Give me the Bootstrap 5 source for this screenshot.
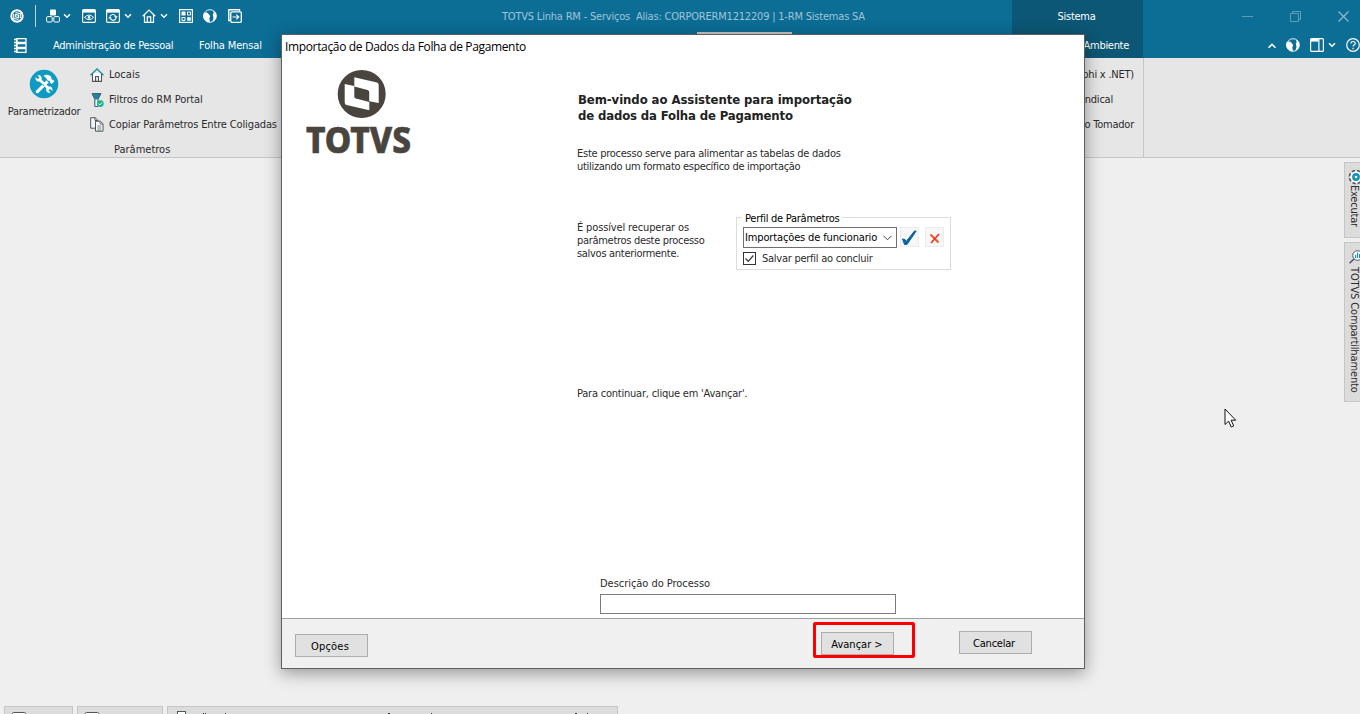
<!DOCTYPE html>
<html lang="pt-BR">
<head>
<meta charset="utf-8">
<title>TOTVS Linha RM</title>
<link rel="stylesheet" href="https://cdn.jsdelivr.net/npm/bootstrap@5.3.0/dist/css/bootstrap.min.css">
<style>
body{height:714px;overflow:hidden;background:#efefef;color:#2b2b2b;font-family:"DejaVu Sans Condensed","DejaVu Sans",sans-serif;font-size:11px;line-height:13px;white-space:nowrap}
svg{display:block;flex:none}
.topbar,.menubar{background:#0c6d95;height:29px;color:#fff}
.tools{padding:5px 0 0 10px}
.vsep{width:1px;height:22px;margin:0 10px 0 11px;background:#b5d3df}
.app-title{color:#a0c4d8;width:364px;margin-left:260px;padding-top:10px;letter-spacing:-.2px}
.ctx{background:#0c5775;width:131px;height:29px}
.active-tab{width:95px;height:26px;background:#c9c9c5}
.ribbon{height:100px;background:#e6e6e6;border-bottom:1px solid #c6c6c6}
.ribbon-right{border-right:1px solid #c6c6c6;height:99px;width:132px}
.rib-row{height:25px}
.ws{height:548px}
.dock{width:16px;overflow:hidden;padding-top:4px}
.dock-tab{width:24px;background:#dcdcdc;border:1px solid #c6c6c6}
.dock-text{writing-mode:vertical-rl;line-height:11px;margin-left:1px}
.taskbtn{height:30px;background:#dcdcdc;border:1px solid #c6c6c6}
.wiz{left:281px;top:34px;width:804px;height:635px;background:#fff;border:1px solid #5c6063;box-shadow:0 4px 16px rgba(0,0,0,.38)}
.wiz-title{font-family:"Open Sans",sans-serif;font-size:12px;color:#000;height:23px;letter-spacing:-.35px}
.wiz-left{width:295px}
.hd{font-size:13px;font-weight:700;line-height:16px;color:#222;letter-spacing:-.07px}
.profile{width:215px;height:53px;border:1px solid #dcdcdc}
.profile-legend{left:5px;top:-6px;background:#fff;padding:0 3px;color:#000}
.combo{width:154px;height:21px;border:1px solid #6f6f6f;color:#000}
.sq{width:19px;height:20px;background:#f7f7f7;border:1px solid #ececec}
.desc{width:296px;height:20px;border:1px solid #7a7a7a}
.wiz-foot{height:50px;background:#f0f0f0;border-top:1px solid #a0a0a0}
.wbtn{width:73px;height:23px;background:#e1e1e1;border:1px solid #adadad;border-radius:0;color:#000;padding:1px 1px 0 0;font-size:11px;line-height:13px}
.hot{left:531px;top:587px;width:102px;height:36px;border:3px solid #f00;border-radius:2px}
.cursor{left:1224px;top:408px}
.ls1{letter-spacing:-.14px}.ls2{letter-spacing:-.22px}.ls25{letter-spacing:-.26px}.ls3{letter-spacing:-.3px}.lp{letter-spacing:.2px}
</style>
</head>
<body>
<svg width="0" height="0" class="position-absolute">
<symbol id="chev" viewBox="0 0 8 6"><path d="M1 1.2l3 3 3-3" fill="none" stroke="#fff" stroke-width="1.5"/></symbol>
<symbol id="globe" viewBox="0 0 14 14"><circle cx="7" cy="7" r="6.3" fill="none" stroke="#fff" stroke-width=".9"/><path d="M1 4Q3.500 3 5 4.200L7.200 7 6.300 9.500 7 13.300A6.300 6.300 0 0 1 1 4zM10 1.500c2.500 1 3.600 3.500 3.400 6-.4 2.700-2 4.600-4.200 5.400L10.500 9 9.800 5.600l.9-1.700z" fill="#fff"/></symbol>
</svg>
<header>
<div class="topbar d-flex align-items-start">
<div class="tools d-flex align-items-center">
<svg width="14" height="14" viewBox="0 0 14 14"><circle cx="7" cy="7" r="5.700" fill="none" stroke="#fff" stroke-width="2"/><path d="M5.600 3.500l4.700 1.200v4.600M8.400 10.500L3.700 9.300V4.700M5.600 5.400l2.900.8v2.500l-2.900-.8z" fill="none" stroke="#fff" stroke-width="1.100"/></svg>
<i class="vsep"></i>
<svg width="14" height="14" viewBox="0 0 14 14"><rect x="4" y="0.500" width="6" height="6" rx="1" fill="#fff"/><rect x=".6" y="7.600" width="5.600" height="5.400" rx="1" fill="none" stroke="#fff"/><rect x="7.800" y="7.600" width="5.600" height="5.400" rx="1" fill="none" stroke="#fff"/></svg>
<svg width="8" height="6" style="margin:0 11px 0 3px"><use href="#chev"/></svg>
<svg width="14" height="14" viewBox="0 0 14 14"><rect x=".6" y=".6" width="12.800" height="12.800" rx="1.200" fill="none" stroke="#fff" stroke-width="1.200"/><path d="M0 1h14v2.600H0z" fill="#fff"/><path d="M2.500 8.400q4.500-4.800 9 0q-4.500 4.600-9 0z" fill="none" stroke="#fff"/><circle cx="7" cy="8.400" r="1.300" fill="#fff"/></svg>
<svg width="14" height="14" viewBox="0 0 14 14" style="margin:0 4px 0 10px"><rect x=".6" y=".6" width="12.800" height="12.800" rx="1.200" fill="none" stroke="#fff" stroke-width="1.200"/><path d="M0 1h14v2.600H0z" fill="#fff"/><path d="M4 7.500a3.100 3.100 0 0 1 5.700-.3M10 9.300a3.100 3.100 0 0 1-5.700.3" fill="none" stroke="#fff" stroke-width="1.100"/><path d="M8 7.300h3.800L10 9.400zM2.200 9.500H6L4 7.400z" fill="#fff"/></svg>
<svg width="8" height="6"><use href="#chev"/></svg>
<svg width="14" height="14" viewBox="0 0 14 14" style="margin:0 4px 0 10px"><path d="M.7 7.200L7 1l6.300 6.200M2.500 6v7.300h9V6M5.300 13V7.800h3.400V13" fill="none" stroke="#fff" stroke-width="1.200"/></svg>
<svg width="8" height="6" style="margin-right:11px"><use href="#chev"/></svg>
<svg width="14" height="14" viewBox="0 0 14 14"><rect x=".6" y=".6" width="12.800" height="12.800" fill="none" stroke="#fff" stroke-width="1.200"/><path d="M2.500 2.500h4v4h-4zM8.200 8.200h3.600v3.600H8.200z" fill="#fff"/><path d="M8.500 3h3v3h-3zM3 8.500h3v3H3z" fill="none" stroke="#fff"/></svg>
<svg width="14" height="14" style="margin:0 11px 0 10px"><use href="#globe"/></svg>
<svg width="14" height="14" viewBox="0 0 14 14"><path d="M2.500 11.500H.8V.8h10.700v1.700" fill="none" stroke="#fff" stroke-width="1.400"/><rect x="2.800" y="2.800" width="10.500" height="10.500" rx="1" fill="none" stroke="#fff" stroke-width="1.300"/><path d="M4.500 8h6M8.300 5.600L10.700 8l-2.400 2.400" fill="none" stroke="#fff" stroke-width="1.200"/></svg>
</div>
<span class="app-title flex-shrink-0">TOTVS Linha RM - Serviços&nbsp; Alias: CORPORERM1212209 | 1-RM Sistemas SA</span>
<div class="ctx ms-auto text-center flex-shrink-0 pt-2"><div style="padding:2px 2px 0 0" class="ls25">Sistema</div></div>
<div class="d-flex align-items-center flex-shrink-0 pt-1" style="width:217px;height:28px;padding-left:99px;gap:37px">
<svg width="11" height="11"><path d="M0 5.500h11" stroke="#5c9fb9"/></svg>
<svg width="11" height="11"><path d="M.5 2.500h8v8h-8zM2.500 2.500v-2h8v8h-2" fill="none" stroke="#5c9fb9"/></svg>
<svg width="11" height="11"><path d="M.5.500l10 10M10.500.500l-10 10" stroke="#8fbbce" stroke-width="1.200"/></svg>
</div>
</div>
<div class="menubar d-flex">
<svg width="13" height="15" viewBox="0 0 13 15" class="flex-shrink-0" style="margin:9px 26px 0 14px"><path d="M2.500.500H12v4H2.500zM2.500 5.500H12v4H2.500zM2.500 10.500H12v4H2.500z" fill="none" stroke="#fff" stroke-width="1.300"/><path d="M3 0v15M0 1.500h3.500M0 4.500h3.500M0 7.500h3.500M0 10.500h3.500M0 13.500h3.500" stroke="#fff" stroke-width="1.400"/></svg>
<span class="ls25 mt-2 pt-1" style="line-height:10px;width:146px">Administração de Pessoal</span>
<span class="ls1 mt-2 pt-1" style="line-height:10px;width:80px">Folha Mensal</span>
<i class="active-tab ms-auto" style="margin-top:3px;margin-right:220px"></i>
<div class="ctx flex-shrink-0 text-end ls3" style="padding:11px 14px 0 0;line-height:11px">Ambiente</div>
<div class="d-flex align-items-center flex-shrink-0" style="width:217px;height:32px;padding-left:124px">
<svg width="10" height="7" viewBox="0 0 8 6" style="transform:rotate(180deg)"><path d="M1 1l3 3 3-3" fill="none" stroke="#fff" stroke-width="1.300"/></svg>
<svg width="14" height="14" style="margin:0 10px 0 9px"><use href="#globe"/></svg>
<svg width="14" height="14" viewBox="0 0 14 14"><rect x=".6" y=".6" width="12.800" height="12.800" rx="1" fill="none" stroke="#fff" stroke-width="1.200"/><path d="M0 1h8.500v2.600H0z" fill="#fff"/><path d="M8.900 0v14" stroke="#fff" stroke-width="1.200"/></svg>
<svg width="8" height="6" style="margin:0 10px 0 4px"><use href="#chev"/></svg>
<svg width="14" height="14" viewBox="0 0 14 14"><circle cx="7" cy="7" r="6.300" fill="none" stroke="#fff" stroke-width="1.200"/><path d="M4.900 5.600c0-2.900 4.300-2.700 4.300-.2 0 1.500-2.200 1.500-2.200 3.100M7 9.800v1.400" fill="none" stroke="#fff" stroke-width="1.200"/></svg>
</div>
</div>
</header>
<section class="ribbon d-flex justify-content-between">
<div class="d-flex">
<div class="d-flex flex-column align-items-center" style="width:88px;padding-top:11px">
<svg width="30" height="30" viewBox="0 0 30 30"><circle cx="15" cy="15" r="14.300" fill="#0f9bc1"/><path d="M9.500 9.500l11 11" stroke="#fff" stroke-width="2.600"/><path d="M6.700 8l2.600 2.500 1.600-1.600L8.300 6.300c3-.8 5.200 1.500 4.300 4.200l-1.900 1.900c-2.700.8-4.900-1.600-4-4.400zM23.300 22l-2.600-2.500-1.600 1.600 2.600 2.600c-3 .8-5.200-1.500-4.300-4.200l1.900-1.900c2.700-.8 4.900 1.600 4 4.400z" fill="#fff"/><path d="M7 21.800l10.500-10.500 2.200 2.200L9.200 24c-1.800.7-3.100-.6-2.200-2.200z" fill="#fff"/><path d="M14.500 6.500c2.500-1.400 5.500-.9 7.300.8l1 3.200 1.500.5 1.200 1.300-2.900 2.800-1.400-1.400-.3-1.600-2.200-.5-1.500-2.400z" fill="#fff"/><path d="M13 14.700l2.400 2.400" stroke="#0f9bc1" stroke-width="1"/></svg>
<span class="ls2" style="margin-top:6px">Parametrizador</span>
</div>
<div style="padding:4px 0 0 2px">
<div class="rib-row d-flex align-items-center"><svg width="14" height="14" viewBox="0 0 14 14"><path d="M2.500 5.500v7.900h9V5.500M5.500 13V8.500h3V13" fill="#fff" stroke="#4c585d" stroke-width="1.100"/><path d="M.5 7.200L7 1l6.500 6.200" fill="none" stroke="#188fae" stroke-width="1.300"/></svg><span style="margin-left:5px">Locais</span></div>
<div class="rib-row d-flex align-items-center"><svg width="14" height="14" viewBox="0 0 14 14"><path d="M2 .6h9L8 6.200v7.200H4.800V6.200z" fill="#1787ad" stroke="#4c585d"/><path d="M5.400 6.500h2.100V13H5.400z" fill="#fff"/><circle cx="10.300" cy="10.600" r="3.400" fill="#16b58c"/><path d="M8.500 10.600l1.300 1.300 2.300-2.400" fill="none" stroke="#fff"/></svg><span style="margin-left:5px;letter-spacing:-.06px">Filtros do RM Portal</span></div>
<div class="rib-row d-flex align-items-center"><svg width="14" height="15" viewBox="0 0 14 15"><path d="M.7.700h4.500l2.600 2.500v8H.7z" fill="#f6f6f6" stroke="#4c585d"/><path d="M5 .7v2.800h2.800" fill="none" stroke="#4c585d"/><path d="M5.500 4.200h4.800l2.700 2.600v7.400H5.500z" fill="#fff" stroke="#4c585d"/><path d="M10 4.200V7h3M7.300 9h4M7.300 11h4M7.300 13h4" fill="none" stroke="#4c585d" stroke-width=".8"/></svg><span class="ls1" style="margin-left:5px">Copiar Parâmetros Entre Coligadas</span></div>
<div class="rib-row d-flex align-items-center" style="padding-left:24px">Parâmetros</div>
</div>
</div>
<div class="d-flex">
<div class="ribbon-right text-end" style="padding-top:4px">
<div class="rib-row d-flex align-items-center justify-content-end ls2" style="padding-right:9px">(Delphi x .NET)</div>
<div class="rib-row d-flex align-items-center justify-content-end ls2" style="padding-right:30px">Sindical</div>
<div class="rib-row d-flex align-items-center justify-content-end ls2" style="padding-right:9px">do Tomador</div>
</div>
<div style="width:216px"></div>
</div>
</section>
<main class="ws d-flex justify-content-end">
<aside class="dock">
<div class="dock-tab d-flex flex-column align-items-start" style="height:76px;padding:6px 0 0 3px">
<svg width="16" height="16" viewBox="0 0 16 16"><circle cx="8" cy="8" r="6.400" fill="#fff" stroke="#4c585d" stroke-width="2" stroke-dasharray="3.300 1.730"/><circle cx="8" cy="8" r="5.800" fill="#fff"/><circle cx="8" cy="8" r="3.900" fill="#1590b8"/><circle cx="8" cy="8" r="1.300" fill="#fff"/></svg>
<span class="dock-text ls2">Executar</span></div>
<div class="dock-tab d-flex flex-column align-items-start mt-1" style="height:160px;padding:7px 0 0 3px">
<svg width="16" height="14" viewBox="0 0 16 14"><circle cx="9.500" cy="5.500" r="4.800" fill="#fff" stroke="#4c585d"/><path d="M6 9l-4.500 4.300" stroke="#4c585d" stroke-width="1.500"/><path d="M7.500 8V5M9.500 8V2.500M11.500 8V4" stroke="#1590b8" stroke-width="1.200"/></svg>
<span class="dock-text ls1" style="margin-top:3px">TOTVS Compartilhamento</span></div>
</aside>
</main>
<footer class="d-flex ps-1 gap-1">
<div class="taskbtn" style="width:69px;padding:5px 0 0 7px"><svg width="14" height="14"><rect x=".5" y=".5" width="13" height="13" rx="1" fill="#fff" stroke="#4c585d"/></svg></div>
<div class="taskbtn" style="width:86px;padding:5px 0 0 7px"><svg width="14" height="14"><rect x=".5" y=".5" width="13" height="13" rx="1" fill="#fff" stroke="#4c585d"/></svg></div>
<div class="taskbtn" style="width:451px;padding:4px 0 0 9px"><svg width="430" height="14"><rect x=".5" y=".500" width="8" height="13" fill="#fff" stroke="#4c585d"/><path d="M26 2.500h1M28 2.500h1M48 2.500h1M211 2.500h2M254 2.500h1M398 2.500h2M410 2.500h1" stroke="#333"/></svg></div>
</footer>

<div class="wiz position-absolute d-flex flex-column" role="dialog">
<div class="wiz-title" style="padding:5px 0 0 3px">Importação de Dados da Folha de Pagamento</div>
<div class="d-flex flex-grow-1">
<div class="wiz-left" style="padding:12px 0 0 24px">
<svg width="110" height="90" viewBox="0 0 110 90"><circle cx="55.700" cy="24" r="24" fill="#4a443f"/><path fill="#fff" d="M48.300 7.200L71 12.500q1.700.6 1.700 2.500v18l-9.500-1.800V22q0-1.600-1.700-2.100l-13.200-3.500z"/><path fill="#fff" d="M48.300 16v10.400q0 1.700 1.600 2.200l13.400 3.300v8.400L40.600 35q-1.900-.5-1.900-2.500V14z"/><text x="0" y="83" font-family="Noto Sans, sans-serif" font-weight="800" font-size="36" fill="#4a443f" stroke="#4a443f" stroke-width=".7" stroke-linejoin="round" textLength="105" lengthAdjust="spacingAndGlyphs">TOTVS</text></svg>
</div>
<div style="padding-top:34px">
<div style="padding-left:1px"><div class="hd">Bem-vindo ao Assistente para importação</div>
<div class="hd ls1">de dados da Folha de Pagamento</div></div>
<div class="ls25" style="margin-top:23px">Este processo serve para alimentar as tabelas de dados</div>
<div class="ls3">utilizando um formato específico de importação</div>
<div class="d-flex" style="margin-top:44px">
<div style="width:159px;padding-top:4px"><div class="ls1">É possível recuperar os</div><div class="ls3">parâmetros deste processo</div><div class="ls3">salvos anteriormente.</div></div>
<div class="profile position-relative">
<div class="profile-legend position-absolute ls25">Perfil de Parâmetros</div>
<div class="d-flex" style="padding:9px 0 0 6px">
<div class="combo d-flex align-items-center justify-content-between ls1" style="padding:0 4px 0 1px">Importações de funcionario<svg width="9" height="6"><path d="M.5.800l4 4 4-4" fill="none" stroke="#444"/></svg></div>
<div class="sq" style="margin-left:3px"><svg width="17" height="18" viewBox="0 0 17 18"><path d="M1.500 11l2.500.5 1.200 2L13.500 3h1.700L6 16.500H3.500z" fill="#0b649a" stroke="#0b649a" stroke-width="1"/></svg></div>
<div class="sq" style="margin-left:6px"><svg width="17" height="18" viewBox="0 0 17 18"><path d="M4.500 6.500l8 8" stroke="#f0522f" stroke-width="2"/><path d="M13 6L5 15" stroke="#e8371c" stroke-width="1.700"/></svg></div>
</div>
<div class="d-flex align-items-center ls25" style="padding:4px 0 0 6px"><svg width="13" height="13" style="margin-right:6px"><rect x=".5" y=".5" width="12" height="12" fill="#fff" stroke="#333"/><path d="M2.500 6.500l2.800 2.800 5-5.800" fill="none" stroke="#333" stroke-width="1.200"/></svg><span style="padding-top:1px;line-height:12px">Salvar perfil ao concluir</span></div>
</div>
</div>
<div class="ls2" style="margin-top:117px">Para continuar, clique em 'Avançar'.</div>
<div style="margin:177px 0 0 23px"><div style="letter-spacing:-.04px">Descrição do Processo</div><div class="desc mt-1"></div></div>
</div>
</div>
<div class="wiz-foot d-flex">
<button class="btn wbtn lp" style="margin:15px 0 0 13px;padding-right:3px">Opções</button>
<button class="btn wbtn" style="margin:13px 0 0 453px">Avançar &gt;</button>
<button class="btn wbtn ls2" style="margin:12px 0 0 65px;padding-right:3px">Cancelar</button>
</div>
<div class="hot position-absolute"></div>
</div>
<svg class="cursor position-absolute" width="13" height="20" viewBox="0 0 13 20"><path d="M1 1v15.500l3.600-3.400 2.600 5.900 2.500-1.100-2.600-5.700h4.600z" fill="#fff" stroke="#111"/></svg>
<script src="https://cdn.jsdelivr.net/npm/bootstrap@5.3.0/dist/js/bootstrap.bundle.min.js"></script>
</body>
</html>
